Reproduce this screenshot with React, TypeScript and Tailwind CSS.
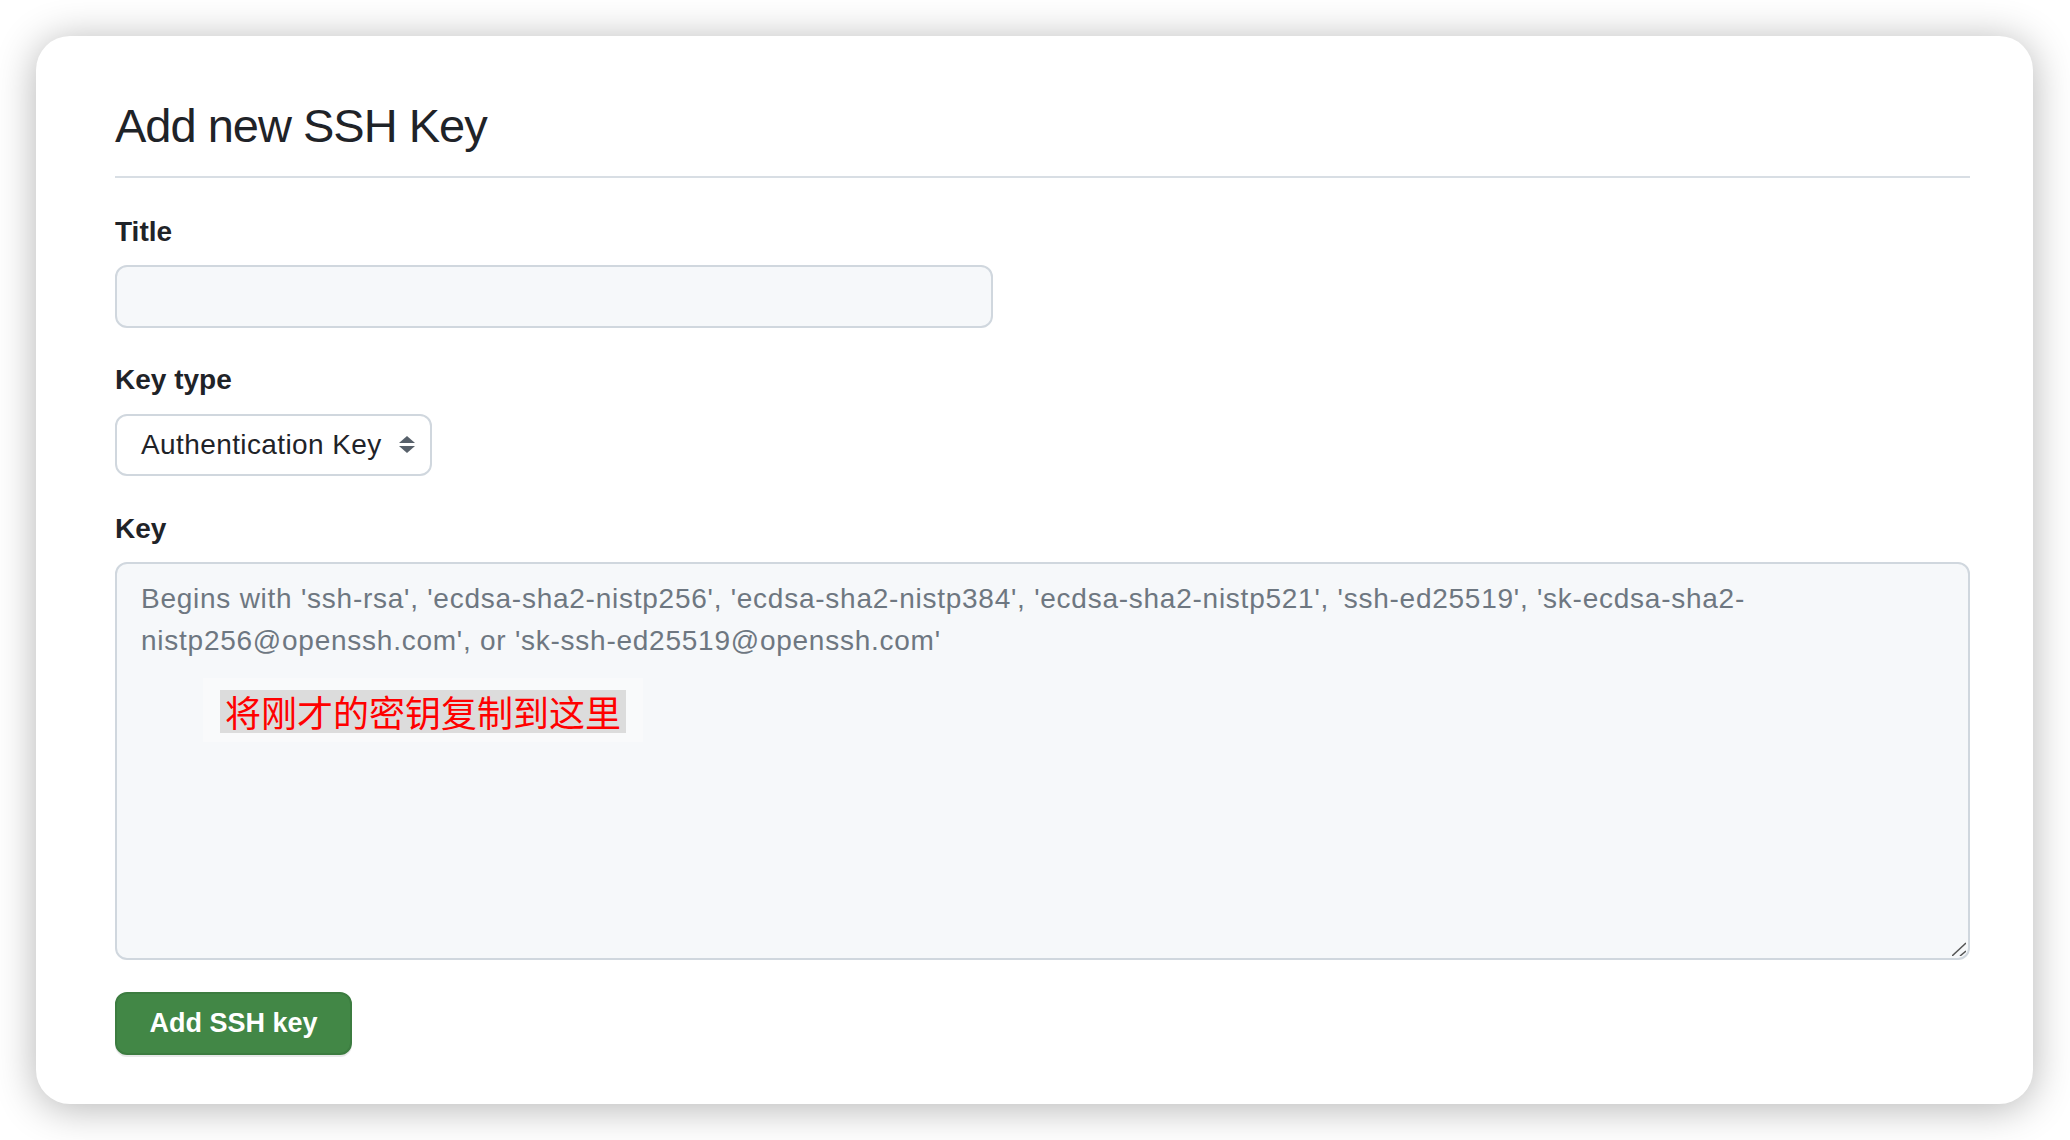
export default function App() {
  return (
    <div className="w-[2070px] h-[1140px] bg-white pl-[36px] pt-[36px] font-['Liberation_Sans','Noto_Sans_CJK_SC',Arial,sans-serif] text-[#1f2328]">
      <div className="w-[1997px] h-[1068px] rounded-[34px] bg-white shadow-[0_4px_40px_rgba(0,0,0,0.3)] pl-[79px] pr-[63px] pt-[62px]">
        <h1 className="text-[47px] leading-[56px] tracking-[-1px] font-normal pb-[22px] border-b-2 border-[#d8dee4]">
          Add new SSH Key
        </h1>

        <label className="block mt-[36px] text-[28px] leading-[36px] font-bold">Title</label>
        <div className="mt-[15px] w-[878px] h-[63px] rounded-[12px] border-2 border-[#d0d7de] bg-[#f6f8fa]" />

        <label className="block mt-[34px] text-[28px] leading-[36px] font-bold">Key type</label>
        <div className="mt-[16px] w-[317px] h-[62px] rounded-[12px] border-2 border-[#d0d7de] bg-white flex items-center pl-[24px] pr-[15px]">
          <span className="text-[28px] leading-[36px] tracking-[0.4px] text-[#1f2328]">Authentication Key</span>
          <svg className="ml-auto" width="16" height="18" viewBox="0 0 16 18">
            <polygon points="0,7 8,0 16,7" fill="#57606a" />
            <polygon points="0,10 8,17 16,10" fill="#57606a" />
          </svg>
        </div>

        <label className="block mt-[35px] text-[28px] leading-[36px] font-bold">Key</label>
        <div className="relative mt-[15px] w-[1855px] h-[398px] rounded-[12px] border-2 border-[#d0d7de] bg-[#f6f8fa] pt-[14px] pl-[24px]">
          <p className="text-[28px] leading-[42px] tracking-[0.75px] text-[#6e7781] whitespace-nowrap">
            Begins with 'ssh-rsa', 'ecdsa-sha2-nistp256', 'ecdsa-sha2-nistp384', 'ecdsa-sha2-nistp521', 'ssh-ed25519', 'sk-ecdsa-sha2-
            <br />
            nistp256@openssh.com', or 'sk-ssh-ed25519@openssh.com'
          </p>
          <div className="absolute left-[86px] top-[114px] w-[440px] h-[64px] bg-[#f9fafb] pl-[17px] pt-[12px]">
            <div className="w-[406px] h-[43px] bg-[#dcdcdc] flex items-center justify-center text-[36px] leading-[43px] text-[#ff0000] font-['Noto_Sans_CJK_SC',sans-serif]">
              将刚才的密钥复制到这里
            </div>
          </div>
          <svg className="absolute right-[2px] bottom-[2px]" width="14" height="14" viewBox="0 0 14 14">
            <line x1="0" y1="14" x2="14" y2="1" stroke="#555" strokeWidth="1.5" />
            <line x1="8" y1="14" x2="14" y2="9" stroke="#555" strokeWidth="1.5" />
          </svg>
        </div>

        <button className="mt-[32px] w-[237px] h-[63px] rounded-[12px] border-2 border-[#3c7c40] bg-[#428746] text-white text-[27px] font-bold shadow-[0_2px_0_rgba(31,35,40,0.1)] flex items-center justify-center">
          Add SSH key
        </button>
      </div>
    </div>
  );
}
